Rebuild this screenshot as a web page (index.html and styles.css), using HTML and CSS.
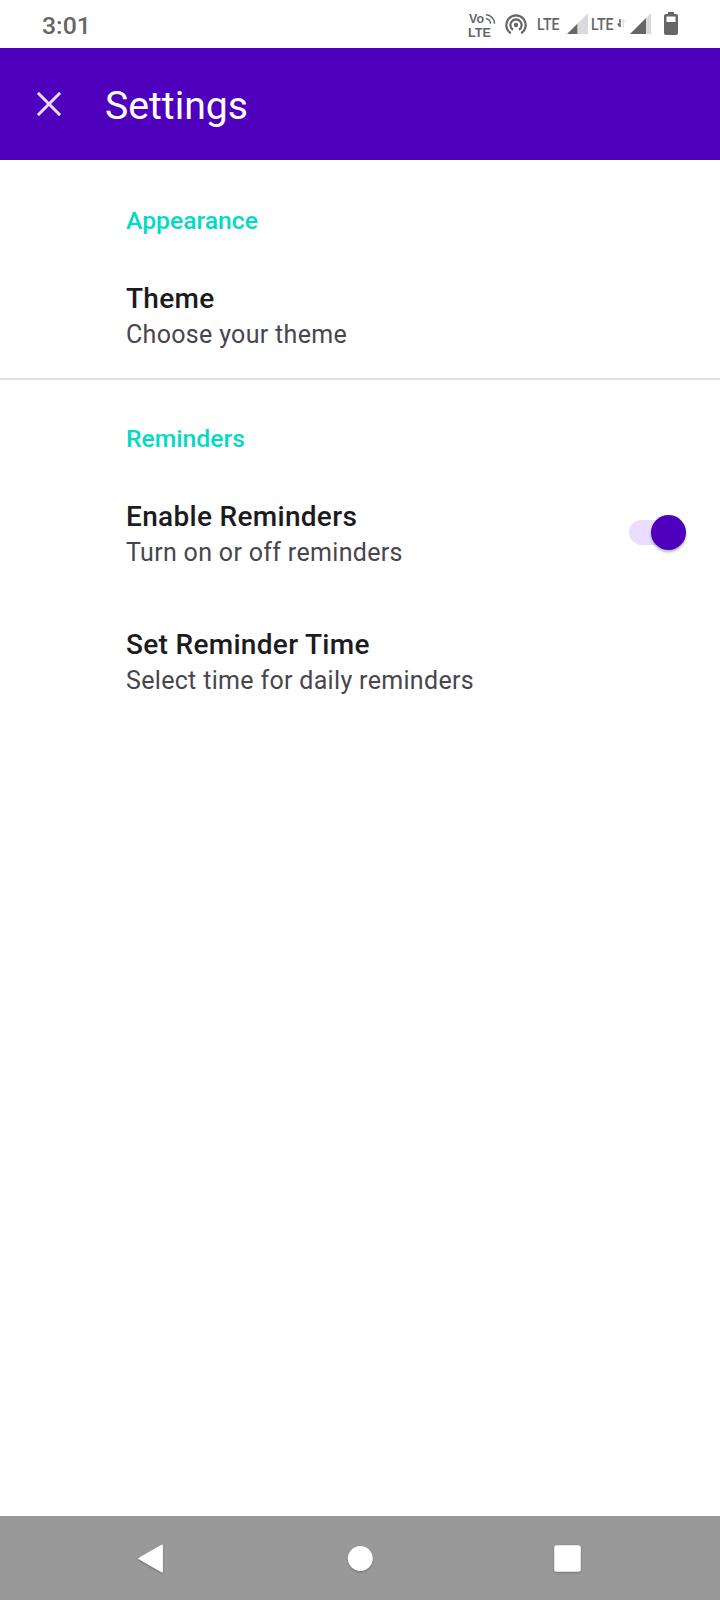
FILE: index.html
```html
<!DOCTYPE html>
<html lang="en">
<head>
<meta charset="utf-8">
<title>Settings</title>
<link rel="stylesheet" href="styles.css">
</head>
<body>
<div class="screen">
  <div class="status-bar">
    <span class="clock">3:01</span>
    <svg class="status-icons" viewBox="464 0 220 48" width="220" height="48">
      <g class="ink">
        <text class="volte" x="469" y="22.500" textLength="15" lengthAdjust="spacingAndGlyphs">Vo</text>
        <text class="volte" x="468" y="37" textLength="23" lengthAdjust="spacingAndGlyphs">LTE</text>
        <text class="lte" x="537" y="30" textLength="22.5" lengthAdjust="spacingAndGlyphs">LTE</text>
        <text class="lte" x="591" y="30" textLength="22.5" lengthAdjust="spacingAndGlyphs">LTE</text>
        <circle cx="516" cy="25" r="2.2"/>
        <path d="M646 18v16h-16z"/>
        <path d="M577.6 23.4v10.6H567z"/>
        <path fill-rule="evenodd" d="M668 12h6v2h2a2 2 0 0 1 2 2v17a2 2 0 0 1-2 2h-10a2 2 0 0 1-2-2V16a2 2 0 0 1 2-2h2zM666.500 16.500v5.500h9v-5.500z"/>
      </g>
      <g class="wave">
        <path stroke-width="1.5" d="M486 14.700a8.700 8.700 0 0 1 8.500 9M486 18.700a5 5 0 0 1 4.500 5"/>
        <path stroke-width="2.200" d="M510.800 33.200A9.700 9.700 0 1 1 521.200 33.200M513 29.800A5.600 5.600 0 1 1 519 29.800"/>
        <path stroke-width="1.500" d="M620 19v8M617.800 23.500l2 3"/>
      </g>
      <g class="faint">
        <path d="M588 13v21h-10.400V23.400z"/>
        <path d="M651 13v21h-5V18z"/>
        <path d="M622.500 19.500h1.300l1.200 2.500h-1.200v5.500h-1.300z"/>
      </g>
    </svg>
  </div>
  <header class="app-bar">
    <svg class="close" viewBox="0 0 24 24" width="24" height="24"><path d="M.9.900 23.100 23.100M23.100.900.900 23.100"/></svg>
    <h1 class="title">Settings</h1>
  </header>
  <main class="content">
    <section class="group">
      <h2 class="category">Appearance</h2>
      <div class="row">
        <div class="label"><div class="name">Theme</div><div class="summary">Choose your theme</div></div>
      </div>
    </section>
    <section class="group">
      <h2 class="category">Reminders</h2>
      <div class="row">
        <div class="label"><div class="name">Enable Reminders</div><div class="summary">Turn on or off reminders</div></div>
        <div class="switch"><div class="thumb"></div></div>
      </div>
      <div class="row">
        <div class="label"><div class="name">Set Reminder Time</div><div class="summary">Select time for daily reminders</div></div>
      </div>
    </section>
  </main>
  <nav class="nav-bar">
    <svg class="nav-icons" viewBox="0 0 720 84" width="720" height="84">
      <path class="back" d="M139.300 42.500 161.900 29.600V55.400z"/>
      <circle cx="360.300" cy="42.500" r="12.500"/>
      <rect x="554.200" y="29.200" width="26.600" height="26.600" rx="2.500"/>
    </svg>
  </nav>
</div>
</body>
</html>
```

FILE: styles.css
```css
* { box-sizing: border-box; }
body {
  margin: 0;
  background: #fff;
  font-family: Roboto, sans-serif;
}
.screen {
  display: flex;
  flex-direction: column;
  width: 720px;
  height: 1600px;
}
.status-bar {
  display: flex;
  justify-content: space-between;
  height: 48px;
  padding: 0 36px 0 42px;
  color: #666;
}
.clock {
  font-size: 24.8px;
  font-weight: 500;
  line-height: 51px;
}
.ink { fill: #666; }
.faint { fill: #dadada; }
.wave { fill: none; stroke: #666; }
.volte { font: bold 13.5px "Liberation Sans", sans-serif; }
.lte { font: 500 16.5px Roboto, sans-serif; }
.app-bar {
  display: flex;
  align-items: center;
  height: 112px;
  padding-left: 37px;
  background: #4f00bc;
}
.close { stroke: #eaddff; stroke-width: 3; fill: none; }
.title {
  margin: 3px 0 0 44px;
  color: #fff;
  font-size: 39.2px;
  font-weight: 400;
  line-height: 46px;
}
.content { flex: 1; }
.group { padding-top: 26px; }
.group:first-child { height: 218px; }
.group + .group {
  padding-top: 24px;
  border-top: 2px solid #e0e0e0;
}
.category {
  height: 64px;
  margin: 0;
  padding-left: 126px;
  color: #03dac5;
  font-size: 24.7px;
  font-weight: 500;
  line-height: 70px;
}
.row {
  display: flex;
  justify-content: space-between;
  align-items: center;
  height: 128px;
  padding: 0 34px 0 126px;
}
.label { padding-top: 4px; }
.name {
  color: #1c1b1f;
  font-size: 28px;
  font-weight: 500;
  line-height: 38px;
  letter-spacing: 0.31px;
}
.summary {
  color: #49454f;
  font-size: 25px;
  line-height: 34px;
  letter-spacing: 0.32px;
}
.switch {
  display: flex;
  align-items: center;
  justify-content: flex-end;
  width: 57px;
  height: 25px;
  border-radius: 13px;
  background: #eaddff;
}
.thumb {
  width: 35px;
  height: 35px;
  border-radius: 50%;
  background: #4f00bc;
  box-shadow: 0 2px 3px rgba(0, 0, 0, 0.3);
}
.nav-bar { height: 84px; background: #999; }
.nav-icons {
  display: block;
  fill: #fff;
  filter: drop-shadow(0 1px 1px rgba(0, 0, 0, 0.25));
}
.back { stroke: #fff; stroke-width: 2; stroke-linejoin: round; }
```
